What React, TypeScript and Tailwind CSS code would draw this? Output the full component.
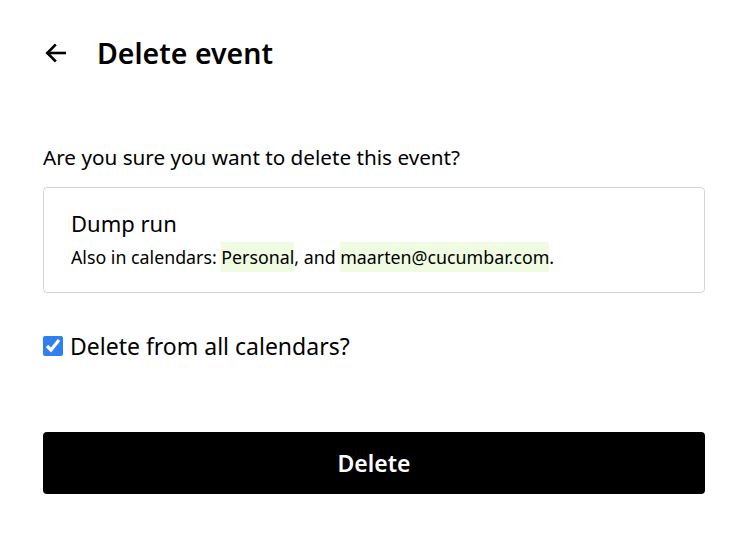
import { useState } from "react";

export default function App() {
  const [all, setAll] = useState(true);

  return (
    <main
      className="w-[750px] min-h-[535px] bg-white text-black pl-[43px] pr-[45px]"
      style={{ fontFamily: '"Noto Sans", Roboto, sans-serif' }}
    >
      <header className="flex items-center h-[106px]">
        <button className="w-[26px] h-[26px] flex items-center justify-center mr-[28px]" aria-label="Back">
          <svg width="26" height="26" viewBox="0 0 24 24" fill="none" stroke="black" strokeWidth="2.4" strokeLinecap="square">
            <path d="M20 12H4.5" />
            <path d="M11 5l-7 7 7 7" />
          </svg>
        </button>
        <h1 className="text-[28.5px] font-semibold leading-none">Delete event</h1>
      </header>

      <p className="text-[20.7px] mt-[37px] leading-[28px]">Are you sure you want to delete this event?</p>

      <div className="mt-[16px] border border-[#d4d4d4] rounded-[4px] h-[106px] px-[27px] pt-[20px]">
        <div className="text-[22px] leading-[30px]">Dump run</div>
        <div className="text-[17.8px] leading-[27px] mt-[6px]">
          Also in calendars: <span className="bg-[#effce2] py-[3px]">Personal</span>, and{" "}
          <span className="bg-[#effce2] py-[3px]">maarten@cucumbar.com</span>.
        </div>
      </div>

      <label className="flex items-center gap-[7px] mt-[38px] text-[23px] leading-[30px]">
        <input
          type="checkbox"
          checked={all}
          onChange={(e) => setAll(e.target.checked)}
          className="w-[20px] h-[20px] accent-[#2f7ff0]"
        />
        Delete from all calendars?
      </label>

      <button className="mt-[71px] w-full h-[62px] bg-black text-white rounded-[4px] text-[23px] font-semibold">
        Delete
      </button>
    </main>
  );
}
